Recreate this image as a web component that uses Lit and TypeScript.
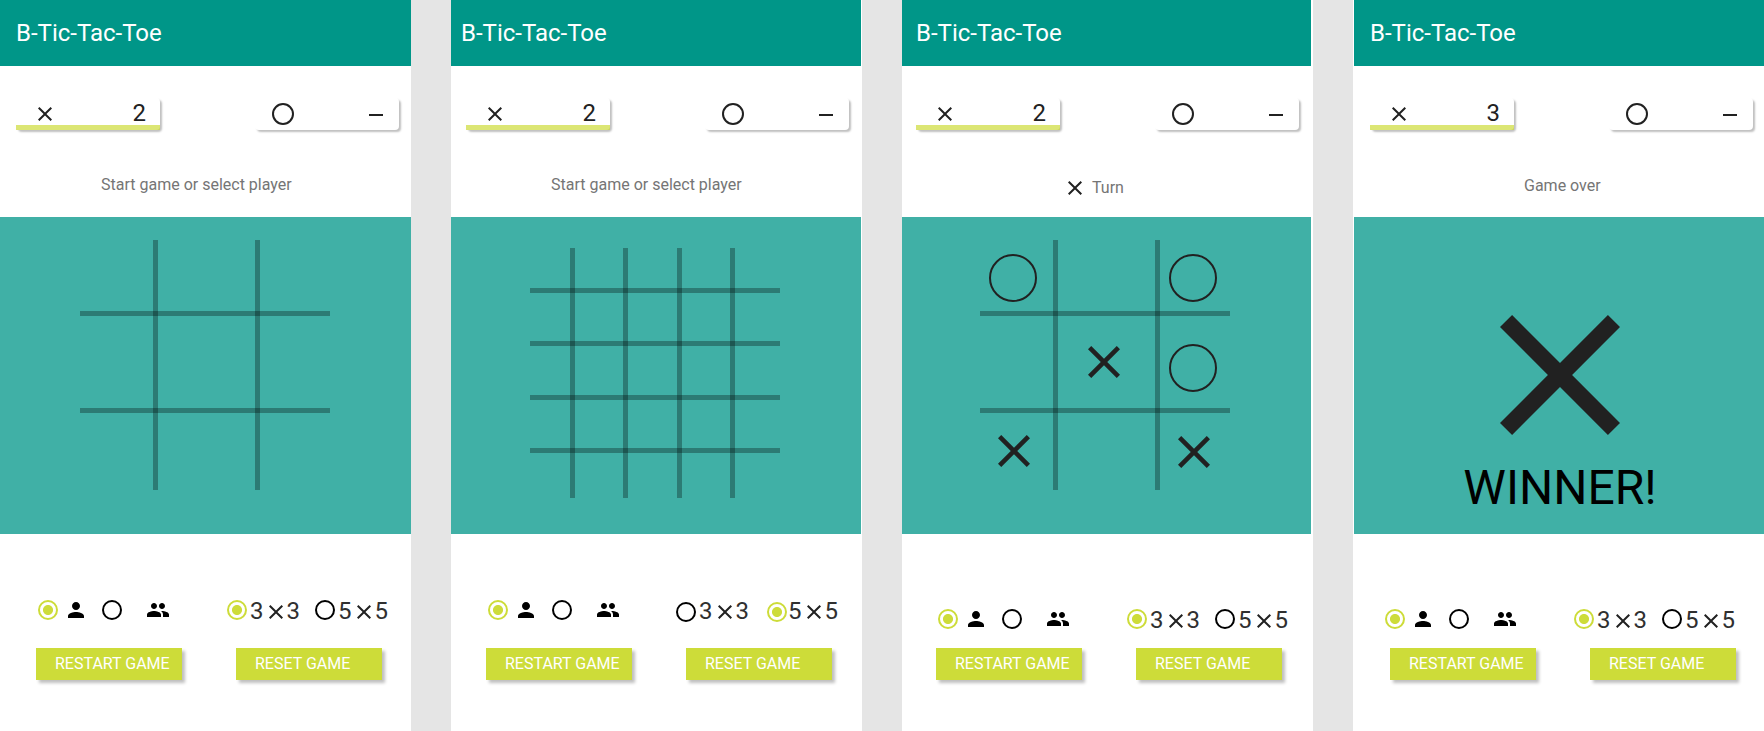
import { LitElement, html, svg, css, nothing } from "lit";
import { customElement, property } from "lit/decorators.js";

type Mark = { kind: "x" | "o"; cx: number; cy: number };

interface Screen {
  variant: "start" | "large" | "playing" | "over";
  score: string;
  status: string;
  turn?: boolean;
  winner?: boolean;
  size: 3 | 5;
  columns: number[];
  rows: number[];
  marks: Mark[];
}

const SCREENS: Screen[] = [
  {
    variant: "start", score: "2", status: "Start game or select player", size: 3,
    columns: [73, 175], rows: [71, 168], marks: [],
  },
  {
    variant: "large", score: "2", status: "Start game or select player", size: 5,
    columns: [40, 93, 147, 200], rows: [40, 93, 147, 200], marks: [],
  },
  {
    variant: "playing", score: "2", status: "Turn", turn: true, size: 3,
    columns: [73, 175], rows: [71, 168],
    marks: [
      { kind: "o", cx: 33, cy: 38 },
      { kind: "o", cx: 213, cy: 38 },
      { kind: "x", cx: 124, cy: 122 },
      { kind: "o", cx: 213, cy: 128 },
      { kind: "x", cx: 34, cy: 211 },
      { kind: "x", cx: 214, cy: 212 },
    ],
  },
  {
    variant: "over", score: "3", status: "Game over", winner: true, size: 3,
    columns: [], rows: [], marks: [],
  },
];

const CROSS = "M14 1.41 12.59 0 7 5.59 1.41 0 0 1.41 5.59 7 0 12.59 1.41 14 7 8.41 12.59 14 14 12.59 8.41 7z";

const cross = (cls: string) => html`
  <svg class="cross ${cls}" viewBox="0 0 14 14" aria-hidden="true"><path d=${CROSS} /></svg>`;

const person = html`
  <svg class="icon" viewBox="0 0 24 24" aria-hidden="true">
    <path d="M12 12c2.21 0 4-1.79 4-4s-1.79-4-4-4-4 1.79-4 4 1.79 4 4 4zm0 2c-2.67 0-8 1.34-8 4v2h16v-2c0-2.66-5.33-4-8-4z" />
  </svg>`;

const people = html`
  <svg class="icon" viewBox="0 0 24 24" aria-hidden="true">
    <path d="M16 11c1.66 0 2.99-1.34 2.99-3S17.66 5 16 5c-1.66 0-3 1.34-3 3s1.34 3 3 3zm-8 0c1.66 0 2.99-1.34 2.99-3S9.66 5 8 5C6.34 5 5 6.34 5 8s1.34 3 3 3zm0 2c-2.33 0-7 1.17-7 3.5V19h14v-2.5c0-2.33-4.67-3.5-7-3.5zm8 0c-.29 0-.62.02-.97.05 1.16.84 1.97 1.97 1.97 3.45V19h6v-2.5c0-2.33-4.67-3.5-7-3.5z" />
  </svg>`;

@customElement("game-screen")
class GameScreen extends LitElement {
  @property({ attribute: false }) screen!: Screen;

  static styles = css`
    :host {
      display: block;
      min-width: 0;
      background: #fff;
      color: #212121;
      font-family: Roboto, "Liberation Sans", sans-serif;
    }
    .screen {
      --inset: 16px;
      --title-inset: 16px;
      --edge-left: 0px;
      --edge-right: 0px;
      --status-top: 43px;
      --status-indent: 85px;
      --grid-top: 23px;
      --options-top: 61px;
      --options-indent: 22px;
      --size-gap: 15px;
      --size-label-gap: 3px;
      --size-radio-top: 0px;
    }
    .large {
      --inset: 15px;
      --title-inset: 10px;
      --edge-right: 1px;
      --grid-top: 31px;
      --size-gap: 18px;
      --size-label-gap: 1px;
      --size-radio-top: 4px;
    }
    .playing {
      --inset: 14px;
      --title-inset: 14px;
      --edge-right: 2px;
      --status-top: 46px;
      --status-indent: 152px;
      --options-top: 70px;
    }
    .over {
      --inset: 17px;
      --title-inset: 16px;
      --edge-left: 1px;
      --status-top: 44px;
      --status-indent: 154px;
      --options-top: 70px;
      --options-indent: 15px;
    }
    .bar {
      display: flex;
      align-items: center;
      height: 66px;
      margin: 0 var(--edge-right) 0 var(--edge-left);
      padding-left: var(--title-inset);
      box-sizing: border-box;
      background: #009688;
      color: #fff;
    }
    .title {
      margin: 0;
      font-size: 24px;
      line-height: 28px;
      font-weight: 400;
    }
    .summary {
      min-height: 151px;
      padding-top: 32px;
      box-sizing: border-box;
    }
    .scores {
      display: flex;
      justify-content: space-between;
      padding: 0 calc(28px - var(--inset)) 0 var(--inset);
    }
    .card {
      position: relative;
      display: flex;
      align-items: center;
      justify-content: space-between;
      width: 144px;
      height: 32px;
      padding: 0 16px 0 17px;
      box-sizing: border-box;
      border-radius: 4px;
      background: #fff;
      box-shadow: 2px 2px 2px rgba(0, 0, 0, 0.25);
      font-size: 24px;
      line-height: 28px;
    }
    .card.active {
      padding: 0 14px 0 22px;
    }
    .score {
      padding-bottom: 2px;
    }
    .active::after {
      content: "";
      position: absolute;
      left: 0;
      right: 0;
      bottom: 0;
      height: 5px;
      background: rgba(205, 220, 57, 0.7);
    }
    .ring {
      width: 22px;
      height: 22px;
      box-sizing: border-box;
      border: 2px solid #212121;
      border-radius: 50%;
    }
    .dash {
      width: 14px;
      height: 2px;
      margin-top: 2px;
      background: #212121;
    }
    .cross {
      display: block;
      flex: none;
      width: 14px;
      height: 14px;
      fill: #212121;
    }
    .status {
      display: flex;
      align-items: center;
      gap: 10px;
      margin: var(--status-top) 0 0;
      padding-left: calc(var(--inset) + var(--status-indent));
      font-size: 16px;
      line-height: 24px;
      color: #757575;
    }
    .board {
      height: 317px;
      margin: 0 var(--edge-right) 0 var(--edge-left);
      box-sizing: border-box;
      background: #40b0a6;
    }
    .grid {
      display: block;
      width: 250px;
      height: 250px;
      padding: var(--grid-top) 0 0 calc(var(--inset) + 64px);
    }
    .line {
      fill: rgba(0, 0, 0, 0.3);
    }
    .nought {
      fill: none;
      stroke: #212121;
      stroke-width: 2;
    }
    .mark {
      fill: #212121;
    }
    .result {
      display: flex;
      flex-direction: column;
      align-items: center;
      gap: 25px;
      padding: 98px 0 0 2px;
    }
    .result .cross {
      width: 120px;
      height: 120px;
    }
    .winner {
      margin: 0;
      font-size: 48px;
      line-height: 56px;
      color: #000;
    }
    .options {
      display: flex;
      justify-content: space-between;
      align-items: flex-start;
      min-height: 114px;
      padding: var(--options-top) calc(61px - var(--inset) - var(--options-indent)) 0
        calc(var(--inset) + var(--options-indent));
      box-sizing: border-box;
    }
    .group {
      display: flex;
      margin: 0;
      padding: 0;
      border: 0;
      min-width: 0;
    }
    .players {
      gap: 14px;
    }
    .sizes {
      gap: var(--size-gap);
    }
    .option {
      display: flex;
      align-items: center;
      height: 30px;
      gap: 6px;
    }
    .option.pair {
      gap: 24px;
    }
    .option.size {
      gap: 3px;
    }
    .option.size.on {
      gap: var(--size-label-gap);
    }
    .size .radio {
      margin-top: var(--size-radio-top);
    }
    .radio {
      appearance: none;
      flex: none;
      width: 20px;
      height: 20px;
      margin: 0;
      border: 2px solid #000;
      border-radius: 50%;
      background: #fff;
    }
    .radio:checked {
      border-color: #cddc39;
      background: radial-gradient(circle, #cddc39 0 4.6px, #fff 5.4px);
    }
    .icon {
      display: block;
      width: 24px;
      height: 24px;
      fill: #000;
    }
    .dims {
      display: flex;
      align-items: baseline;
      padding-top: 2px;
      font-size: 24px;
      line-height: 28px;
      color: #303030;
    }
    .dims .cross {
      margin: 0 4px 0 5px;
    }
    .actions {
      display: flex;
      justify-content: space-between;
      padding: 0 calc(45px - var(--inset)) 0 calc(var(--inset) + 20px);
    }
    .button {
      width: 146px;
      height: 32px;
      padding: 0 0 0 19px;
      border: 0;
      background: #cddc39;
      box-shadow: 3px 3px 3px rgba(0, 0, 0, 0.25);
      color: #fff;
      font: 400 16px/24px Roboto, "Liberation Sans", sans-serif;
      text-align: left;
      white-space: nowrap;
    }
  `;

  private renderMark(m: Mark) {
    return m.kind === "o"
      ? svg`<circle class="nought" cx=${m.cx} cy=${m.cy} r="23" />`
      : svg`<svg x=${m.cx - 16} y=${m.cy - 16} width="32" height="32" viewBox="0 0 14 14"><path class="mark" d=${CROSS} /></svg>`;
  }

  private renderBoard(s: Screen) {
    if (s.winner) {
      return html`<div class="result">${cross("")}<p class="winner">WINNER!</p></div>`;
    }
    return html`
      <svg class="grid" viewBox="0 0 250 250" role="img" aria-label="Board">
        ${s.columns.map((x) => svg`<rect class="line" x=${x} y="0" width="5" height="250" />`)}
        ${s.rows.map((y) => svg`<rect class="line" x="0" y=${y} width="250" height="5" />`)}
        ${s.marks.map((m) => this.renderMark(m))}
      </svg>`;
  }

  private renderSize(n: 3 | 5, current: number) {
    return html`
      <label class="option size ${n === current ? "on" : ""}">
        <input class="radio" type="radio" name="size" .checked=${n === current} aria-label="${n} by ${n}" />
        <span class="dims">${n}${cross("")}${n}</span>
      </label>`;
  }

  render() {
    const s = this.screen;
    return html`
      <main class="screen ${s.variant}">
        <header class="bar"><h1 class="title">B-Tic-Tac-Toe</h1></header>
        <section class="summary">
          <div class="scores">
            <div class="card active">${cross("")}<span class="score">${s.score}</span></div>
            <div class="card"><span class="ring"></span><span class="dash"></span></div>
          </div>
          <p class="status">${s.turn ? cross("") : nothing}<span>${s.status}</span></p>
        </section>
        <section class="board">${this.renderBoard(s)}</section>
        <form class="controls" @submit=${(e: Event) => e.preventDefault()}>
          <div class="options">
            <fieldset class="group players" aria-label="Players">
              <label class="option">
                <input class="radio" type="radio" name="players" aria-label="One player" .checked=${true} />${person}
              </label>
              <label class="option pair">
                <input class="radio" type="radio" name="players" aria-label="Two players" />${people}
              </label>
            </fieldset>
            <fieldset class="group sizes" aria-label="Board size">
              ${this.renderSize(3, s.size)}${this.renderSize(5, s.size)}
            </fieldset>
          </div>
          <div class="actions">
            <button class="button" type="button">RESTART GAME</button>
            <button class="button" type="button">RESET GAME</button>
          </div>
        </form>
      </main>`;
  }
}

@customElement("app-root")
class AppRoot extends LitElement {
  static styles = css`
    :host {
      display: grid;
      grid-template-columns: repeat(4, minmax(0, 1fr));
      gap: 40px;
      min-height: 100vh;
      background: #e5e5e5;
    }
  `;

  render() {
    return SCREENS.map((s) => html`<game-screen .screen=${s}></game-screen>`);
  }
}
